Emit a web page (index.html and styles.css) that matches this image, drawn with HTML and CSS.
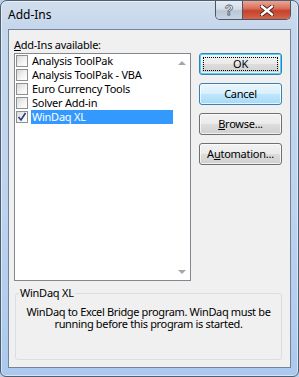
FILE: index.html
```html
<!DOCTYPE html>
<html lang="en">
<head>
    <meta charset="UTF-8">
    <meta name="viewport" content="width=device-width, initial-scale=1.0">
    <title>Add-Ins</title>
    <link rel="stylesheet" href="styles.css">
</head>
<body>
    <div class="window">
        <div class="titlebar">
            <span class="title">Add-Ins</span>
            <div class="caption-buttons">
                <div class="cap help"><span class="qmark">?</span></div>
                <div class="cap close">
                    <svg width="14" height="11" viewBox="0 0 14 11">
                        <path d="M2 1.5 L12 9.5 M12 1.5 L2 9.5" stroke="#4a1c16" stroke-width="4.2" stroke-linecap="square"/>
                        <path d="M2 1.5 L12 9.5 M12 1.5 L2 9.5" stroke="#ffffff" stroke-width="2.4" stroke-linecap="square"/>
                    </svg>
                </div>
            </div>
        </div>
        <div class="client">
            <div class="main">
                <div class="list-col">
                    <div class="field-label"><u>A</u>dd-Ins available:</div>
                    <div class="listbox">
                        <ul class="items">
                            <li><span class="check"></span><span class="item-text">Analysis ToolPak</span></li>
                            <li><span class="check"></span><span class="item-text">Analysis ToolPak - VBA</span></li>
                            <li><span class="check"></span><span class="item-text">Euro Currency Tools</span></li>
                            <li><span class="check"></span><span class="item-text">Solver Add-in</span></li>
                            <li class="selected">
                                <span class="check">
                                    <svg width="10" height="10" viewBox="0 0 10 10">
                                        <path d="M1.5 5 L4 8 L8.5 1" fill="none" stroke="#2a3d78" stroke-width="1.6"/>
                                    </svg>
                                </span>
                                <span class="item-text">WinDaq XL</span>
                            </li>
                        </ul>
                        <div class="scrollbar">
                            <span class="arrow-box"><span class="arrow up"></span></span>
                            <span class="arrow-box"><span class="arrow down"></span></span>
                        </div>
                    </div>
                </div>
                <div class="buttons">
                    <div class="btn default"><span class="focus">OK</span></div>
                    <div class="btn hover">Cancel</div>
                    <div class="btn"><u>B</u>rowse...</div>
                    <div class="btn">A<u>u</u>tomation...</div>
                </div>
            </div>
            <fieldset class="group">
                <legend>WinDaq XL</legend>
                <p>WinDaq to Excel Bridge program. WinDaq must be running before this program is started.</p>
            </fieldset>
        </div>
    </div>
</body>
</html>
```

FILE: styles.css
```css
* {
    box-sizing: border-box;
}

body {
    margin: 0;
    background: #b9cfe9;
    font-family: "Noto Sans", "DejaVu Sans", sans-serif;
    font-size: 11px;
    letter-spacing: -0.25px;
    color: #000;
}

.window {
    width: 299px;
    height: 377px;
    border: 1px solid #4f5f72;
    border-radius: 7px 7px 6px 6px;
    background: linear-gradient(180deg, #d2deed 0%, #c6d7ec 7%, #bdd3ee 55%, #abc9ee 100%);
    box-shadow: inset 0 0 0 1px rgba(255, 255, 255, 0.5);
    padding: 0 7px 8px;
    display: flex;
    flex-direction: column;
}

.titlebar {
    height: 28px;
    display: flex;
    align-items: flex-start;
}

.title {
    margin-top: 6px;
    font-size: 12px;
    line-height: 16px;
    letter-spacing: 0;
}

.caption-buttons {
    margin-left: auto;
    display: flex;
    height: 19px;
    border: 1px solid #4a5566;
    border-top: none;
    border-radius: 0 0 5px 5px;
    overflow: hidden;
}

.cap {
    display: flex;
    align-items: center;
    justify-content: center;
}

.help {
    width: 27px;
    background: linear-gradient(180deg, #e6ecf3 0%, #d3dce7 45%, #b8c6d6 55%, #c9d5e3 100%);
    border-right: 1px solid #4a5566;
}

.qmark {
    font-family: "Liberation Sans", sans-serif;
    font-weight: bold;
    font-size: 14px;
    line-height: 14px;
    color: #fff;
    -webkit-text-stroke: 0.8px #5a6474;
}

.close {
    width: 47px;
    background: linear-gradient(180deg, #eba594 0%, #d9725c 40%, #c7412a 55%, #d4654c 100%);
}

.client {
    flex: 1;
    border: 1px solid #73849a;
    background: #f0f0f0;
    padding: 7px 8px 7px 5px;
    display: flex;
    flex-direction: column;
}

.main {
    display: flex;
    align-items: flex-start;
    gap: 8px;
}

.list-col {
    width: 177px;
}

.field-label {
    height: 15px;
    line-height: 15px;
    margin-bottom: 1px;
}

.listbox {
    height: 228px;
    border: 1px solid #828790;
    background: #fff;
    display: flex;
}

.items {
    flex: 1;
    list-style: none;
    margin: 0;
    padding: 0;
}

.items li {
    height: 14px;
    display: flex;
    align-items: center;
}

.check {
    width: 12px;
    height: 12px;
    margin: 0 3px 0 1px;
    border: 1px solid #8e8f8f;
    background: linear-gradient(135deg, #d8d8d8 0%, #f4f4f4 60%, #ffffff 100%);
    display: flex;
    align-items: center;
    justify-content: center;
}

.item-text {
    flex: 1;
    height: 14px;
    line-height: 14px;
    padding-left: 1px;
}

.selected .item-text {
    background: #3399ff;
    color: #fff;
}

.scrollbar {
    width: 17px;
    display: flex;
    flex-direction: column;
    justify-content: space-between;
}

.arrow-box {
    height: 17px;
    display: flex;
    align-items: center;
    justify-content: center;
}

.arrow {
    width: 0;
    height: 0;
    border-left: 4px solid transparent;
    border-right: 4px solid transparent;
}

.arrow.up {
    border-bottom: 4px solid #a7a7a7;
}

.arrow.down {
    border-top: 4px solid #a7a7a7;
}

.buttons {
    width: 83px;
    margin-top: 16px;
    display: flex;
    flex-direction: column;
    gap: 8px;
}

.btn {
    height: 22px;
    border: 1px solid #707070;
    border-radius: 3px;
    background: linear-gradient(180deg, #f2f2f2 0%, #ebebeb 48%, #dddddd 52%, #cfcfcf 100%);
    box-shadow: inset 0 0 0 1px rgba(255, 255, 255, 0.7);
    display: flex;
    align-items: center;
    justify-content: center;
    line-height: 14px;
}

.btn.default {
    border-color: #3c7fb1;
    box-shadow: inset 0 0 0 1px #48d4f8, inset 0 0 0 2px rgba(255, 255, 255, 0.6);
    padding: 3px;
}

.focus {
    flex: 1;
    align-self: stretch;
    border: 1px dotted #000;
    display: flex;
    align-items: center;
    justify-content: center;
}

.btn.hover {
    border-color: #3c7fb1;
    background: linear-gradient(180deg, #eaf6fd 0%, #d9f0fc 48%, #bee6fd 52%, #a7d9f5 100%);
}

.group {
    flex: 1;
    margin: 5px 0 0 1px;
    padding: 0;
    border: 1px solid #d5dfe5;
    border-radius: 3px;
    min-width: 0;
}

.group legend {
    margin-left: 3px;
    padding: 0 1px;
    line-height: 14px;
}

.group p {
    margin: 6px 0 0;
    padding: 0 3px;
    text-align: center;
    line-height: 12px;
    letter-spacing: -0.35px;
}
```
